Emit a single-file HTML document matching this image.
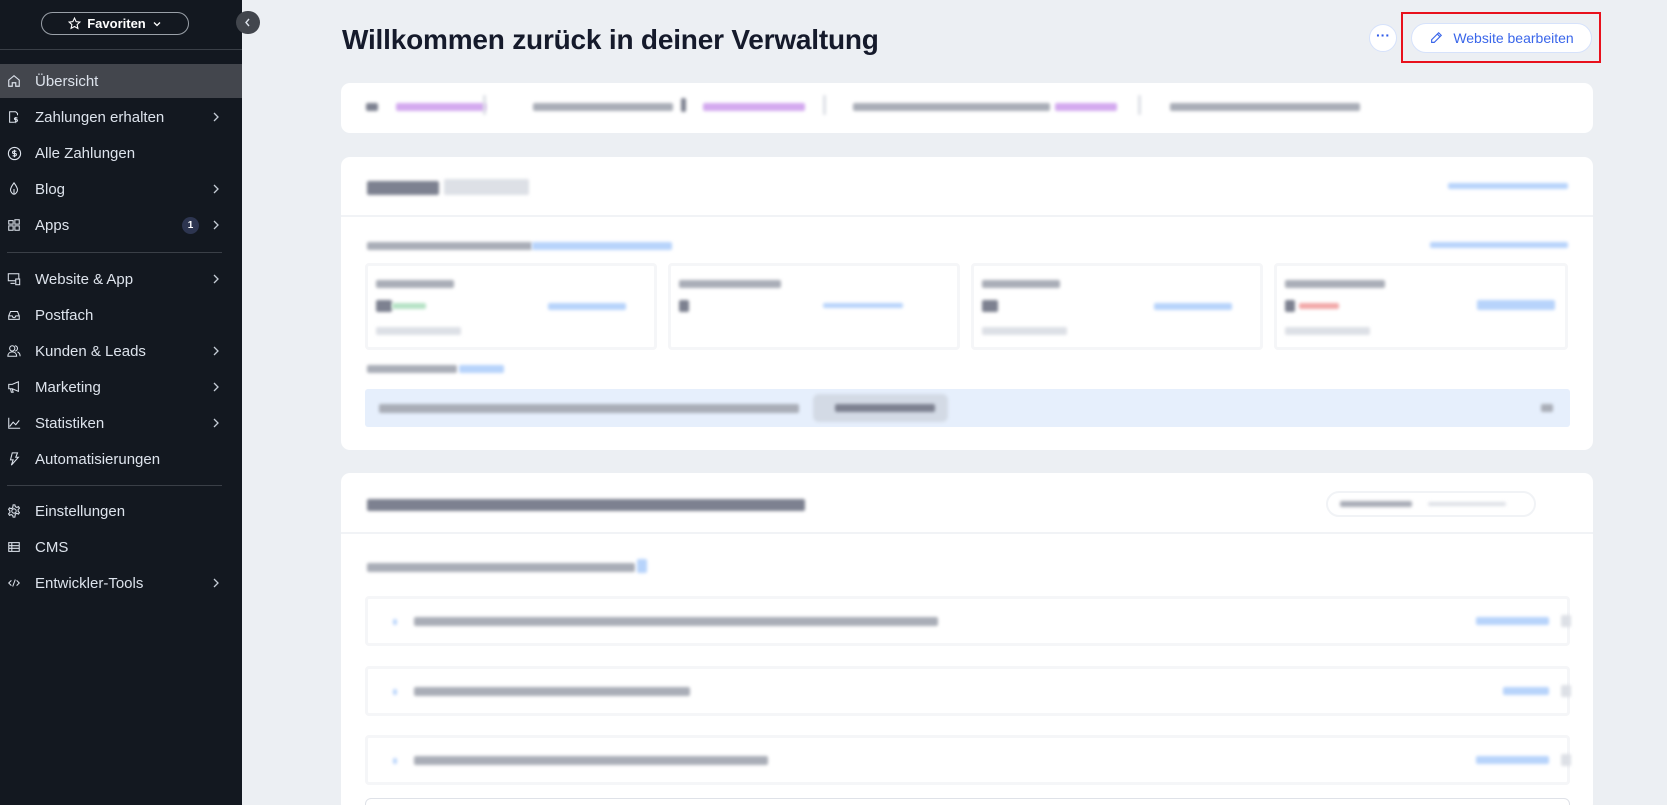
<!DOCTYPE html>
<html><head><meta charset="utf-8"><style>
*{margin:0;padding:0;box-sizing:border-box}
html,body{width:1667px;height:805px;overflow:hidden}
body{background:#eceff3;font-family:"Liberation Sans",sans-serif;position:relative}
.sb{position:absolute;left:0;top:0;width:242px;height:805px;background:#131820}
.fav{position:absolute;left:41px;top:12px;width:148px;height:23px;border:1px solid #9aa0a8;border-radius:12px;color:#fff;font-weight:bold;font-size:13px;display:flex;align-items:center;justify-content:center;gap:6px}
.hr{position:absolute;left:0;width:242px;height:1px;background:#3a3f47}
.hr2{position:absolute;left:7px;width:215px;height:1px;background:#3a3f47}
.it{position:absolute;left:0;width:242px;height:34px;display:flex;align-items:center;color:#dde3ec;font-size:15px}
.it svg{position:absolute;left:7px;top:10px}
.it span.t{position:absolute;left:35px}
.it .ch{position:absolute;left:211px;top:11px}
.sel{background:#43464d}
.badge{position:absolute;left:182px;top:9px;width:17px;height:17px;border-radius:50%;background:#2d3550;color:#fff;font-size:10px;font-weight:bold;display:flex;align-items:center;justify-content:center}
.col{position:absolute;left:236px;top:11px;width:24px;height:23px;border-radius:12px;background:#42464d}
h1{position:absolute;left:342px;top:24px;font-size:28px;font-weight:bold;color:#151a2b;letter-spacing:-0.2px}
.dots{position:absolute;left:1369px;top:24px;width:28px;height:28px;border-radius:50%;background:#fff;border:1px solid #d6e2fb;color:#2f5bea;font-weight:bold;text-align:center;line-height:20px;font-size:14px}
.wb{position:absolute;left:1411px;top:23px;width:181px;height:30px;border-radius:15px;background:#fff;border:1px solid #d6e2fb;color:#3a66ea;font-size:14px;display:flex;align-items:center;justify-content:center;gap:10px}
.red{position:absolute;left:1401px;top:12px;width:200px;height:51px;border:2px solid #e8111d}
.card{position:absolute;left:341px;width:1252px;background:#fff;border-radius:9px;overflow:hidden}
.b{position:absolute;height:8px;border-radius:2px;filter:blur(1.5px)}
.g{background:#a9adb7}.gd{background:#7d8190}.p{background:#d3a9ef}.bl{background:#b7d3fb}.gl{background:#dde0e6}
.box{position:absolute;border:3px solid #f5f6f8;border-radius:4px}
.line{position:absolute;left:0;width:1252px;height:2px;background:#f1f3f6}
</style></head><body>
<div class="sb">
<div class="fav"><svg width="13" height="13" viewBox="0 0 24 24" fill="none" stroke="#fff" stroke-width="2"><path d="M12 2l3 6.5 7 .8-5.2 4.8 1.5 7L12 17.5 5.7 21l1.5-7L2 9.3l7-.8z"/></svg>Favoriten<svg width="10" height="10" viewBox="0 0 10 10" fill="none" stroke="#fff" stroke-width="1.3"><path d="M2 3.5l3 3 3-3"/></svg></div>
<div class="hr" style="top:49px"></div>
<div class="it sel" style="top:64px"><svg width="14" height="14" viewBox="0 0 16 16" fill="none" stroke="#dde3ec" stroke-width="1.3"><path d="M2 7l6-5 6 5v7H10V10H6v4H2z"/></svg><span class="t">Übersicht</span></div>
<div class="it" style="top:100px"><svg width="14" height="14" viewBox="0 0 16 16" fill="none" stroke="#dde3ec" stroke-width="1.2"><path d="M9 14H3V2h7l2 2v2M10 8v7M12 9h-2.5a1 1 0 000 2h1.5a1 1 0 010 2H9"/></svg><span class="t">Zahlungen erhalten</span><svg class="ch" width="10" height="12" viewBox="0 0 10 12" fill="none" stroke="#c5ccd6" stroke-width="1.3"><path d="M3 2l4 4-4 4"/></svg></div>
<div class="it" style="top:136px"><svg width="15" height="15" viewBox="0 0 16 16" fill="none" stroke="#dde3ec" stroke-width="1.2"><circle cx="8" cy="8" r="6.5"/><path d="M10 5.5H7.2a1.2 1.2 0 000 2.5h1.6a1.2 1.2 0 010 2.5H6M8 4v8"/></svg><span class="t">Alle Zahlungen</span></div>
<div class="it" style="top:172px"><svg width="14" height="14" viewBox="0 0 16 16" fill="none" stroke="#dde3ec" stroke-width="1.2"><path d="M8 1c-3 4-4 6-4 8s2 5 4 5 4-3 4-5-1-4-4-8zM8 8v6"/></svg><span class="t">Blog</span><svg class="ch" width="10" height="12" viewBox="0 0 10 12" fill="none" stroke="#c5ccd6" stroke-width="1.3"><path d="M3 2l4 4-4 4"/></svg></div>
<div class="it" style="top:208px"><svg width="14" height="14" viewBox="0 0 16 16" fill="none" stroke="#dde3ec" stroke-width="1.2"><rect x="2" y="9" width="5" height="5"/><rect x="9" y="9" width="5" height="5"/><rect x="2" y="3" width="5" height="4"/><rect x="9" y="2" width="5" height="5"/></svg><span class="t">Apps</span><div class="badge">1</div><svg class="ch" width="10" height="12" viewBox="0 0 10 12" fill="none" stroke="#c5ccd6" stroke-width="1.3"><path d="M3 2l4 4-4 4"/></svg></div>
<div class="hr2" style="top:252px"></div>
<div class="it" style="top:262px"><svg width="14" height="14" viewBox="0 0 16 16" fill="none" stroke="#dde3ec" stroke-width="1.2"><rect x="1.5" y="2" width="12" height="8"/><path d="M4 13h5"/><rect x="10" y="8" width="4.5" height="6.5" fill="#131820"/></svg><span class="t">Website &amp; App</span><svg class="ch" width="10" height="12" viewBox="0 0 10 12" fill="none" stroke="#c5ccd6" stroke-width="1.3"><path d="M3 2l4 4-4 4"/></svg></div>
<div class="it" style="top:298px"><svg width="14" height="14" viewBox="0 0 16 16" fill="none" stroke="#dde3ec" stroke-width="1.2"><path d="M2 9l2-5h8l2 5v4H2zM2 9h4l1 2h2l1-2h4"/></svg><span class="t">Postfach</span></div>
<div class="it" style="top:334px"><svg width="14" height="14" viewBox="0 0 16 16" fill="none" stroke="#dde3ec" stroke-width="1.2"><circle cx="6" cy="5" r="3"/><path d="M1 14c0-3 2-5 5-5s5 2 5 5zM9 2a3 3 0 010 6M12 9c2 1 3 3 3 5"/></svg><span class="t">Kunden &amp; Leads</span><svg class="ch" width="10" height="12" viewBox="0 0 10 12" fill="none" stroke="#c5ccd6" stroke-width="1.3"><path d="M3 2l4 4-4 4"/></svg></div>
<div class="it" style="top:370px"><svg width="14" height="14" viewBox="0 0 16 16" fill="none" stroke="#dde3ec" stroke-width="1.2"><path d="M2 5h4l7-3v11l-7-3H2zM4 10l1 4h2l-1-4"/></svg><span class="t">Marketing</span><svg class="ch" width="10" height="12" viewBox="0 0 10 12" fill="none" stroke="#c5ccd6" stroke-width="1.3"><path d="M3 2l4 4-4 4"/></svg></div>
<div class="it" style="top:406px"><svg width="14" height="14" viewBox="0 0 16 16" fill="none" stroke="#dde3ec" stroke-width="1.2"><path d="M2 2v12h13M3 12l4-5 3 3 4-5"/></svg><span class="t">Statistiken</span><svg class="ch" width="10" height="12" viewBox="0 0 10 12" fill="none" stroke="#c5ccd6" stroke-width="1.3"><path d="M3 2l4 4-4 4"/></svg></div>
<div class="it" style="top:442px"><svg width="14" height="14" viewBox="0 0 16 16" fill="none" stroke="#dde3ec" stroke-width="1.2"><path d="M6 1h6l-2 5h3L5 15l2-6H4z"/></svg><span class="t">Automatisierungen</span></div>
<div class="hr2" style="top:485px"></div>
<div class="it" style="top:494px"><svg width="14" height="14" viewBox="0 0 16 16" fill="none" stroke="#dde3ec" stroke-width="1.2"><circle cx="8" cy="8" r="2.5"/><path d="M7 1h2l.5 2 1.7.9 2-.8 1 1.7-1.5 1.5v2l1.5 1.5-1 1.7-2-.8-1.7.9L9 15H7l-.5-2-1.7-.9-2 .8-1-1.7L3.3 9.7v-2L1.8 6.2l1-1.7 2 .8 1.7-.9z"/></svg><span class="t">Einstellungen</span></div>
<div class="it" style="top:530px"><svg width="14" height="14" viewBox="0 0 16 16" fill="none" stroke="#dde3ec" stroke-width="1.2"><rect x="2" y="3" width="12" height="10"/><path d="M2 6.5h12M2 9.5h12M5.5 3v10"/></svg><span class="t">CMS</span></div>
<div class="it" style="top:566px"><svg width="14" height="14" viewBox="0 0 16 16" fill="none" stroke="#dde3ec" stroke-width="1.2"><path d="M5 5L2 8l3 3M11 5l3 3-3 3M9.5 4l-3 8"/></svg><span class="t">Entwickler-Tools</span><svg class="ch" width="10" height="12" viewBox="0 0 10 12" fill="none" stroke="#c5ccd6" stroke-width="1.3"><path d="M3 2l4 4-4 4"/></svg></div>
</div>
<div class="col"><svg style="position:absolute;left:7px;top:6px" width="10" height="11" viewBox="0 0 10 11" fill="none" stroke="#dde3ec" stroke-width="1.4"><path d="M6 2L3 5.5 6 9"/></svg></div>

<h1>Willkommen zurück in deiner Verwaltung</h1>
<div class="dots">···</div>
<div class="wb"><svg width="14" height="14" viewBox="0 0 16 16" fill="none" stroke="#3a66ea" stroke-width="1.3"><path d="M11 2l3 3-8 8H3v-3zM9.5 3.5l3 3"/></svg>Website bearbeiten</div>
<div class="red"></div>

<div class="card" style="top:83px;height:50px">
<div class="b gd" style="left:25px;top:20px;width:12px"></div><div class="b p" style="left:55px;top:20px;width:90px"></div>
<div class="b gl" style="left:142px;top:12px;width:3px;height:20px"></div>
<div class="b g" style="left:192px;top:20px;width:140px"></div><div class="b gd" style="left:340px;top:15px;width:5px;height:14px"></div><div class="b p" style="left:362px;top:20px;width:102px"></div>
<div class="b gl" style="left:482px;top:12px;width:3px;height:20px"></div>
<div class="b g" style="left:512px;top:20px;width:197px"></div><div class="b p" style="left:714px;top:20px;width:62px"></div>
<div class="b gl" style="left:797px;top:12px;width:3px;height:20px"></div>
<div class="b g" style="left:829px;top:20px;width:190px"></div>
</div>

<div class="card" style="top:157px;height:293px">
<div class="b gd" style="left:26px;top:24px;width:72px;height:14px"></div><div class="b gl" style="left:103px;top:22px;width:85px;height:16px"></div>
<div class="b bl" style="left:1107px;top:26px;width:120px;height:6px"></div>
<div class="line" style="top:58px"></div>
<div class="b g" style="left:26px;top:85px;width:165px;height:8px"></div><div class="b bl" style="left:191px;top:85px;width:140px;height:8px"></div>
<div class="b bl" style="left:1089px;top:85px;width:138px;height:6px"></div>
<div class="box" style="left:24px;top:106px;width:292px;height:87px"><div class="b g" style="left:8px;top:14px;width:78px"></div><div class="b gd" style="left:8px;top:34px;width:16px;height:12px"></div><div class="b" style="background:#b5e2c5;left:24px;top:37px;width:34px;height:6px"></div><div class="b bl" style="left:180px;top:37px;width:78px;height:7px"></div><div class="b gl" style="left:8px;top:61px;width:85px;height:8px"></div></div>
<div class="box" style="left:327px;top:106px;width:292px;height:87px"><div class="b g" style="left:8px;top:14px;width:102px"></div><div class="b gd" style="left:8px;top:34px;width:10px;height:12px"></div><div class="b bl" style="left:152px;top:37px;width:80px;height:5px"></div></div>
<div class="box" style="left:630px;top:106px;width:292px;height:87px"><div class="b g" style="left:8px;top:14px;width:78px"></div><div class="b gd" style="left:8px;top:34px;width:16px;height:12px"></div><div class="b bl" style="left:180px;top:37px;width:78px;height:7px"></div><div class="b gl" style="left:8px;top:61px;width:85px;height:8px"></div></div>
<div class="box" style="left:933px;top:106px;width:294px;height:87px"><div class="b g" style="left:8px;top:14px;width:100px"></div><div class="b gd" style="left:8px;top:34px;width:10px;height:12px"></div><div class="b" style="background:#f2a8a8;left:22px;top:37px;width:40px;height:6px"></div><div class="b bl" style="left:200px;top:34px;width:78px;height:10px"></div><div class="b gl" style="left:8px;top:61px;width:85px;height:8px"></div></div>
<div class="b g" style="left:26px;top:208px;width:90px;height:8px"></div><div class="b bl" style="left:118px;top:208px;width:45px;height:8px"></div>
<div style="position:absolute;left:24px;top:232px;width:1205px;height:38px;background:#e6effc;border-radius:3px"><div class="b g" style="left:14px;top:15px;width:420px;height:9px"></div><div class="b" style="background:#d3dae5;left:448px;top:5px;width:135px;height:28px;border-radius:6px"></div><div class="b gd" style="left:470px;top:15px;width:100px;height:8px"></div><div class="b g" style="left:1176px;top:15px;width:12px;height:8px"></div></div>
</div>

<div class="card" style="top:473px;height:340px">
<div class="b gd" style="left:26px;top:26px;width:438px;height:12px"></div>
<div style="position:absolute;left:985px;top:18px;width:210px;height:26px;border:2px solid #f1f3f6;border-radius:13px"><div class="b g" style="left:12px;top:8px;width:72px;height:6px"></div><div class="b gl" style="left:100px;top:9px;width:78px;height:4px"></div></div>
<div class="line" style="top:59px"></div>
<div class="b g" style="left:26px;top:90px;width:268px;height:9px"></div><div class="b bl" style="left:296px;top:86px;width:10px;height:14px"></div>
<div class="box" style="left:24px;top:123px;width:1205px;height:50px"><div class="b bl" style="left:25px;top:20px;width:4px;height:6px"></div><div class="b g" style="left:46px;top:18px;width:524px;height:9px"></div><div class="b bl" style="left:1108px;top:18px;width:73px;height:8px"></div><div class="b gl" style="left:1193px;top:16px;width:10px;height:12px"></div></div>
<div class="box" style="left:24px;top:193px;width:1205px;height:50px"><div class="b bl" style="left:25px;top:20px;width:4px;height:6px"></div><div class="b g" style="left:46px;top:18px;width:276px;height:9px"></div><div class="b bl" style="left:1135px;top:18px;width:46px;height:8px"></div><div class="b gl" style="left:1193px;top:16px;width:10px;height:12px"></div></div>
<div class="box" style="left:24px;top:262px;width:1205px;height:50px"><div class="b bl" style="left:25px;top:20px;width:4px;height:6px"></div><div class="b g" style="left:46px;top:18px;width:354px;height:9px"></div><div class="b bl" style="left:1108px;top:18px;width:73px;height:8px"></div><div class="b gl" style="left:1193px;top:16px;width:10px;height:12px"></div></div>
<div style="position:absolute;left:24px;top:325px;width:1205px;height:40px;border:1px solid #dfe2e8;border-radius:6px"></div>
</div>
</body></html>
